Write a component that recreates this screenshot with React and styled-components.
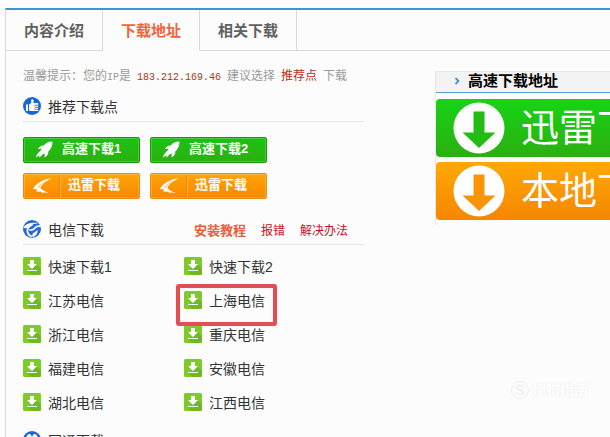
import styled, { createGlobalStyle, css } from 'styled-components'

const GlobalStyle = createGlobalStyle`
    * {
        box-sizing: border-box;
    }
    body {
        margin: 0;
        background: #fcfcfc;
        color: #333;
        font-family: "Liberation Sans", "Noto Sans CJK SC", sans-serif;
        font-size: 14px;
    }
    a {
        color: inherit;
        text-decoration: none;
    }
    button {
        font-family: inherit;
        border: 0;
        padding: 0;
        cursor: pointer;
    }
`

const Page = styled.div`
    height: 100vh;
    overflow: hidden;
    padding: 8px 0 0 5px;
`

const Panel = styled.main`
    min-height: 100%;
    border-top: 2px solid #3a96d2;
    border-left: 1px solid #d9d9d9;
`

const TabBar = styled.nav`
    display: flex;
    height: 41px;
    &::after {
        content: "";
        flex: 1;
        border-bottom: 1px solid #d9d9d9;
    }
`

const Tab = styled.button`
    width: 97px;
    padding-bottom: 2px;
    background: none;
    border-right: 1px solid #d9d9d9;
    border-bottom: 1px solid ${props => props.$active ? 'transparent' : '#d9d9d9'};
    color: ${props => props.$active ? '#f4623a' : '#606060'};
    font-size: 15px;
    font-weight: 700;
`

const Columns = styled.div`
    display: grid;
    grid-template-columns: 341px minmax(240px, 1fr);
    column-gap: 71px;
    align-items: start;
    padding-left: 17px;
`

const Main = styled.div`
    padding-top: 17px;
`

const Tip = styled.p`
    display: flex;
    gap: 6px;
    height: 16px;
    margin: 0 0 7px;
    line-height: 16px;
    font-size: 12px;
    color: #999;
    white-space: nowrap;
`

const Latin = styled.span`
    font-family: "Liberation Mono", monospace;
    font-size: 10px;
`

const Accent = styled.span`
    color: #c03010;
`

const SectionHead = styled.div`
    display: flex;
    align-items: center;
    height: 31px;
    border-bottom: 1px solid #e2e8ea;
    svg {
        flex: none;
        margin-right: 7px;
    }
`

const SectionTitle = styled.h2`
    flex: 1;
    margin: 0;
    font-size: 14px;
    font-weight: 400;
`

const HelpLinks = styled.div`
    display: flex;
    align-items: center;
    gap: 15px;
    padding-right: 16px;
    font-size: 12px;
    color: #c8101c;
`

const HelpLink = styled.a`
    ${props => props.$strong && css`
        font-size: 13px;
        font-weight: 700;
        color: #e5603c;
    `}
`

const ButtonGrid = styled.div`
    display: grid;
    grid-template-columns: repeat(2, 117px);
    gap: 10px;
    padding: 15px 0;
`

const TONES = {
    green: { from: '#1bc113', to: '#2bb10f', edge: '#159a0c' },
    orange: { from: '#ffa408', to: '#f98700', edge: '#ee8a0c' },
}

const SmallButton = styled.button`
    display: flex;
    align-items: center;
    height: 26px;
    padding-left: 8px;
    border: 1px solid ${props => TONES[props.$tone].edge};
    border-radius: 2px;
    box-shadow: inset 0 0 0 1px rgba(255, 255, 255, 0.2);
    background: linear-gradient(${props => TONES[props.$tone].from}, ${props => TONES[props.$tone].to});
    color: #fff;
    font-size: 13px;
    font-weight: 700;
    line-height: 22px;
    white-space: nowrap;
    svg {
        flex: none;
    }
`

const ButtonText = styled.span`
    padding-bottom: 2px;
    margin-left: ${props => props.$divided ? '7px' : '4px'};
`

const Divider = styled.span`
    width: 2px;
    height: 22px;
    margin-left: 1px;
    border-left: 1px solid #e58a10;
    border-right: 1px solid #ffb340;
`

const List = styled.ul`
    display: grid;
    grid-template-columns: 161px 161px;
    margin: 0;
    padding: 4px 0 6px;
    list-style: none;
`

const Item = styled.li`
    position: relative;
    display: flex;
    align-items: center;
    height: 34px;
`

const ItemLink = styled.a`
    display: flex;
    align-items: center;
    gap: 7px;
`

const Marker = styled.span`
    position: absolute;
    z-index: 1;
    top: 1px;
    left: -8px;
    width: 101px;
    height: 42px;
    border: 4px solid #e04f54;
    border-radius: 3px;
    box-shadow: 0 0 1px #f4b4b4, inset 0 0 1px #f4b4b4;
    pointer-events: none;
`

const Side = styled.aside`
    margin-top: 20px;
    border-left: 1px solid #e8e8e8;
`

const SideTitle = styled.h2`
    display: flex;
    align-items: center;
    gap: 7px;
    height: 22px;
    margin: 0 0 6px;
    padding: 0 0 3px 18px;
    border-top: 1px solid #e8e8e8;
    border-bottom: 1px solid #54a4d4;
    background: #f3f3f3;
    color: #000;
    font-size: 15px;
    line-height: 18px;
    font-weight: 700;
`

const BigButton = styled.button`
    display: flex;
    align-items: center;
    gap: 16px;
    width: 100%;
    height: 58px;
    margin-bottom: 5px;
    padding-left: 17px;
    border-radius: 4px;
    background: ${props => props.$tone === 'green'
        ? 'linear-gradient(#16d414, #2caf12)'
        : 'linear-gradient(#ffa806, #f68600)'};
    color: #fff;
    font-size: 38px;
    line-height: 58px;
    white-space: nowrap;
    overflow: hidden;
    svg {
        flex: none;
    }
`

const Watermark = styled.div`
    position: fixed;
    right: 22px;
    bottom: 36px;
    display: flex;
    align-items: center;
    gap: 2px;
    color: #fff;
    font-size: 14px;
    font-weight: 700;
    line-height: 22px;
    text-shadow: 0 0 2px #e4e4e4;
`

function ThumbIcon() {
    return (
        <svg width="18" height="18" viewBox="0 0 18 18" aria-hidden="true">
            <circle cx="9" cy="9" r="9" fill="#1766d6" />
            <path d="M3 7.500h2v6.500H3zM6 7.500l2.200-1.500V3.200c0-1.200 2-1.200 2.400.3.200 1 0 2-.3 2.600H15.200v8H7.500L6 13.500z" fill="#fff" />
            <path d="M11.500 8.300h4M11.500 10.300h4M11.500 12.200h4" stroke="#1766d6" strokeWidth=".8" />
        </svg>
    )
}

function TelecomIcon() {
    return (
        <svg width="18" height="18" viewBox="0 0 18 18" aria-hidden="true">
            <circle cx="9" cy="9" r="9" fill="#2468d8" />
            <path d="M0 7.800C2.500 3.800 8 1.800 15.800 3.200 12 3.300 9.500 4 7.600 5.800 5.600 8 3 8.800 0 7.800z" fill="#fcfcfc" />
            <path d="M18 6.300c-3.500-.8-5 .1-6.200 1.800C10.500 10 8.800 10.600 6.300 9.800" fill="none" stroke="#fcfcfc" strokeWidth="1.700" />
            <path d="M9.500 4.500C5.500 6.500 3.800 9 4.500 12c.5 2.300 2 3.800 4.300 4.600" fill="none" stroke="#fcfcfc" strokeWidth="1.700" />
            <path d="M10 17.500c-1.500-2.200-.8-4 1.500-5.300 1.500-.8 2.500-1.600 3-2.700.3 3-.5 5.500-4.500 8z" fill="#fcfcfc" />
        </svg>
    )
}

function NetcomIcon() {
    return (
        <svg width="18" height="18" viewBox="0 0 18 18" aria-hidden="true">
            <circle cx="9" cy="9" r="9" fill="#1766d6" />
            <path d="M3 9c0-3.500 1.500-6 3.500-6 1.300 0 2 1.500 2.500 3 .5-1.500 1.200-3 2.500-3C13.500 3 15 5.500 15 9l-3 5-3-4-3 4z" fill="#fff" />
            <path d="M5.500 7l1.200-1.500L8 9l-1.500 2zM12.500 7l-1.200-1.500L10 9l1.500 2z" fill="#1766d6" />
        </svg>
    )
}

function RocketIcon() {
    return (
        <svg width="26" height="20" viewBox="0 0 26 20" aria-hidden="true">
            <path d="M20.500 1.500c-4 .2-6.800 1.300-8.800 4-2.400-.2-4.400 1.100-5.900 3.300l3.600-.1-1 2.200c-2 1-3.500 3.300-4.600 6.600l3.700-2.300-.3 2.600 3.600-3.600 1.900-.6-.1 3.900c2.800-1.600 3.900-3.600 3.700-6 2.600-2.500 4.200-5.500 4.200-10z" fill="#fff" />
        </svg>
    )
}

function BirdIcon() {
    return (
        <svg width="26" height="20" viewBox="0 0 26 20" aria-hidden="true">
            <path d="M20 2C11 3.500 3.500 7.500 1 13l4.500.6L4 15.500l5.500.3 1.500 2 .5-1.500 5.500 1c-3.500-1.500-6.500-3-8.500-5C9 9 13.500 5 20 2z" fill="#fff" />
            <path d="M15.500 4.500C10 6.500 6.500 9 4.500 11.800l3-.3C9 8.800 11.500 6.800 15.500 4.500z" fill="#fdd091" />
        </svg>
    )
}

function SaveIcon() {
    return (
        <svg width="18" height="18" viewBox="0 0 18 18" aria-hidden="true">
            <rect width="18" height="18" rx="1.500" fill="#7ecb28" />
            <path d="M13.500 7.500l4.500 4V17l-1 1H8l-4-4z" fill="#6fb823" />
            <path d="M7 3h4v4h3L9 12 4 7h3zM4 13h10v1H4z" fill="#fff" />
        </svg>
    )
}

function ArrowDisc({ color }) {
    return (
        <svg width="52" height="52" viewBox="0 0 52 52" aria-hidden="true">
            <circle cx="26" cy="26" r="25.500" fill="#fff" />
            <path d="M20.500 9.500h11V30.500h11L26 46 9.500 30.500h11z" fill={color} />
        </svg>
    )
}

const TABS = ['内容介绍', '下载地址', '相关下载']

const MIRRORS = [
    '快速下载1', '快速下载2',
    '江苏电信', '上海电信',
    '浙江电信', '重庆电信',
    '福建电信', '安徽电信',
    '湖北电信', '江西电信',
]

export default function App() {
    return (
        <Page>
            <GlobalStyle />
            <Panel>
                <TabBar>
                    {TABS.map((tab, i) => (
                        <Tab key={tab} type="button" $active={i === 1}>{tab}</Tab>
                    ))}
                </TabBar>
                <Columns>
                    <Main>
                        <Tip>
                            <span>温馨提示：您的<Latin>IP</Latin>是</span>
                            <Accent><Latin>183.212.169.46</Latin></Accent>
                            <span>建议选择</span>
                            <Accent>推荐点</Accent>
                            <span>下载</span>
                        </Tip>
                        <SectionHead>
                            <ThumbIcon />
                            <SectionTitle>推荐下载点</SectionTitle>
                        </SectionHead>
                        <ButtonGrid>
                            {['高速下载1', '高速下载2'].map(label => (
                                <SmallButton key={label} type="button" $tone="green">
                                    <RocketIcon />
                                    <ButtonText>{label}</ButtonText>
                                </SmallButton>
                            ))}
                            {[1, 2].map(n => (
                                <SmallButton key={n} type="button" $tone="orange">
                                    <BirdIcon />
                                    <Divider />
                                    <ButtonText $divided>迅雷下载</ButtonText>
                                </SmallButton>
                            ))}
                        </ButtonGrid>
                        <SectionHead>
                            <TelecomIcon />
                            <SectionTitle>电信下载</SectionTitle>
                            <HelpLinks>
                                <HelpLink href="#" $strong>安装教程</HelpLink>
                                <HelpLink href="#">报错</HelpLink>
                                <HelpLink href="#">解决办法</HelpLink>
                            </HelpLinks>
                        </SectionHead>
                        <List>
                            {MIRRORS.map(name => (
                                <Item key={name}>
                                    <ItemLink href="#">
                                        <SaveIcon />
                                        {name}
                                    </ItemLink>
                                    {name === '上海电信' && <Marker />}
                                </Item>
                            ))}
                        </List>
                        <SectionHead>
                            <NetcomIcon />
                            <SectionTitle>网通下载</SectionTitle>
                        </SectionHead>
                    </Main>
                    <Side>
                        <SideTitle>
                            <svg width="7" height="8" viewBox="0 0 7 8" aria-hidden="true">
                                <path d="M1.500 1l3 3-3 3" fill="none" stroke="#4a94cc" strokeWidth="1.800" />
                            </svg>
                            高速下载地址
                        </SideTitle>
                        <BigButton type="button" $tone="green">
                            <ArrowDisc color="#22bc14" />
                            迅雷下载
                        </BigButton>
                        <BigButton type="button" $tone="orange">
                            <ArrowDisc color="#f99408" />
                            本地下载
                        </BigButton>
                    </Side>
                </Columns>
            </Panel>
            <Watermark>
                <svg width="20" height="20" viewBox="0 0 20 20" aria-hidden="true">
                    <circle cx="10" cy="10" r="8.500" fill="none" stroke="#f3f3f3" strokeWidth="1.500" />
                    <path d="M13.500 7C11 5 6.500 5.500 6.500 8c0 2.500 7 1.500 7 4.200 0 2.500-4.500 2.800-7.200.8" fill="none" stroke="#f1f1f1" strokeWidth="2" />
                </svg>
                搜狗指南
            </Watermark>
        </Page>
    )
}
